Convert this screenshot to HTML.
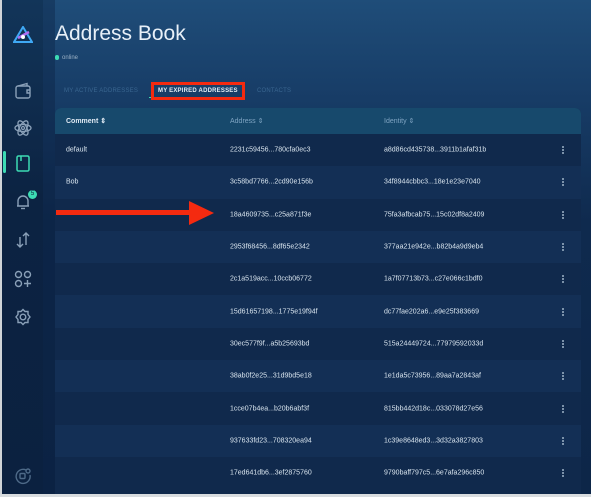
<!DOCTYPE html>
<html><head><meta charset="utf-8"><style>
*{margin:0;padding:0;box-sizing:border-box}
body{width:591px;height:497px;overflow:hidden;background:#fff;font-family:"Liberation Sans",sans-serif;position:relative}
#app{position:absolute;left:2px;top:0;width:589px;height:494px;background:linear-gradient(180deg,#1f4d79 0%,#173c66 20%,#0f2a4e 45%,#0d2648 100%);overflow:hidden}
#side{position:absolute;left:0;top:0;width:41px;height:494px;background:linear-gradient(180deg,#123559 0%,#0c2342 40%,#0b2140 100%)}
#side2{position:absolute;left:41px;top:0;width:12px;height:494px;background:rgba(10,30,60,0.35)}
.ic{position:absolute;left:12px;width:18px;height:18px}
h1{position:absolute;left:53px;top:22px;font-size:21px;font-weight:normal;color:#e8f0f8}
.onl{position:absolute;left:53px;top:55px;font-size:6px;color:#9ab0c4}
.onl i{display:inline-block;width:4px;height:5px;background:#3ddcb4;border-radius:2px;margin-right:3px;vertical-align:-1px}
.tab{position:absolute;top:88px;font-size:6px;color:#3a6690;letter-spacing:.2px}
#tbl{position:absolute;left:53px;top:108px;width:526px;height:390px;border-radius:6px 6px 0 0;overflow:hidden;background:#10294c}
.hd{height:26px;background:#17496c;position:relative;font-size:7px;color:#7fa4c2}
.row{height:32.3px;position:relative;font-size:7px;color:#d8e4ee}
.row:nth-child(even){background:#10294c}
.row:nth-child(odd){background:#132f55}
.c1{position:absolute;left:11px;top:50%;transform:translateY(-50%)}
.c2{position:absolute;left:175px;top:50%;transform:translateY(-50%)}
.c3{position:absolute;left:329px;top:50%;transform:translateY(-50%)}
.dots{position:absolute;left:507px;top:50%;transform:translateY(-50%);width:2px;height:9px;background:radial-gradient(circle,#9fb4c8 0.9px,transparent 1px) 0 0/2px 3px}
</style></head><body>
<div id="app">
<div id="side"></div><div id="side2"></div>
<svg style="position:absolute;left:11px;top:26px" width="20" height="18" viewBox="0 0 20 18"><polygon points="10,1 19,16 1,16" fill="none" stroke="#3fa9f5" stroke-width="2"/><path d="M5 12 L16 6" stroke="#b06cf0" stroke-width="2.5"/><circle cx="10" cy="11" r="2" fill="#fff"/></svg>
<svg class="ic" style="top:82px" viewBox="0 0 18 18" fill="none" stroke="#8aa0b8" stroke-width="1.4"><rect x="2" y="4" width="14" height="12" rx="2"/><path d="M4 4 L13 1.5 L13 4"/><path d="M16 8 h-3 v3 h3"/></svg>
<svg class="ic" style="top:119px" viewBox="0 0 18 18" fill="none" stroke="#8aa0b8" stroke-width="1.3"><ellipse cx="9" cy="9" rx="8" ry="3.5"/><ellipse cx="9" cy="9" rx="8" ry="3.5" transform="rotate(60 9 9)"/><ellipse cx="9" cy="9" rx="8" ry="3.5" transform="rotate(120 9 9)"/><circle cx="9" cy="9" r="1.5"/></svg>
<div style="position:absolute;left:1px;top:151px;width:3px;height:22px;background:#3ddcb4;border-radius:2px"></div>
<svg class="ic" style="top:154px" viewBox="0 0 18 18" fill="none" stroke="#3ddcb4" stroke-width="1.5"><rect x="3" y="2" width="12" height="15" rx="1.5"/><path d="M7 2 v5"/></svg>
<svg class="ic" style="top:193px" viewBox="0 0 18 18" fill="none" stroke="#8aa0b8" stroke-width="1.4"><path d="M4 13 V8 a5 5 0 0 1 10 0 V13 H3 H15"/><path d="M7 15.5 h4"/></svg>
<div style="position:absolute;left:26px;top:190px;width:9px;height:9px;border-radius:50%;background:#3ddcb4;color:#0b2240;font-size:6px;text-align:center;line-height:9px">5</div>
<svg class="ic" style="top:231px" viewBox="0 0 18 18" fill="none" stroke="#8aa0b8" stroke-width="1.4"><path d="M6 6 v10 M3 13 l3 3 l3-3"/><path d="M12 14 V2 M9 5 l3-3 l3 3"/></svg>
<svg class="ic" style="top:270px" viewBox="0 0 18 18" fill="none" stroke="#8aa0b8" stroke-width="1.4"><circle cx="4.5" cy="4.5" r="3"/><circle cx="13.5" cy="4.5" r="3"/><circle cx="4.5" cy="13.5" r="3"/><path d="M13.5 10 v7 M10 13.5 h7"/></svg>
<svg class="ic" style="top:308px" viewBox="0 0 18 18" fill="none" stroke="#8aa0b8" stroke-width="1.4"><path d="M9 1.5 l2 2 h3 v3 l2 2.5 l-2 2.5 v3 h-3 l-2 2 l-2-2 h-3 v-3 l-2-2.5 l2-2.5 v-3 h3z"/><circle cx="9" cy="9" r="2.8"/></svg>
<svg class="ic" style="top:467px" viewBox="0 0 18 18" fill="none" stroke="#4e6a88" stroke-width="1.4"><path d="M12 3 A7 7 0 1 0 16 8"/><rect x="6" y="6.5" width="5" height="5" rx="1"/><circle cx="14" cy="4" r="2"/></svg>
<h1>Address Book</h1>
<div class="onl"><i></i>online</div>
<div class="tab" style="left:62px">MY ACTIVE ADDRESSES</div>
<div class="tab" style="left:156px;color:#e6eef6;font-weight:bold">MY EXPIRED ADDRESSES</div>
<div style="position:absolute;left:147px;top:97px;width:95px;height:1px;background:#3ddcb4"></div>
<div class="tab" style="left:255px">CONTACTS</div>
<div id="tbl">
<div class="hd"><span class="c1" style="color:#e0eaf4;font-weight:bold">Comment ⇕</span><span class="c2">Address ⇕</span><span class="c3">Identity ⇕</span></div>
<div class="row"><span class="c1">default</span><span class="c2">2231c59456...780cfa0ec3</span><span class="c3">a8d86cd435738...3911b1afaf31b</span><i class="dots"></i></div>
<div class="row"><span class="c1">Bob</span><span class="c2">3c58bd7766...2cd90e156b</span><span class="c3">34f8944cbbc3...18e1e23e7040</span><i class="dots"></i></div>
<div class="row"><span class="c2">18a4609735...c25a871f3e</span><span class="c3">75fa3afbcab75...15c02df8a2409</span><i class="dots"></i></div>
<div class="row"><span class="c2">2953f68456...8df65e2342</span><span class="c3">377aa21e942e...b82b4a9d9eb4</span><i class="dots"></i></div>
<div class="row"><span class="c2">2c1a519acc...10ccb06772</span><span class="c3">1a7f07713b73...c27e066c1bdf0</span><i class="dots"></i></div>
<div class="row"><span class="c2">15d61657198...1775e19f94f</span><span class="c3">dc77fae202a6...e9e25f383669</span><i class="dots"></i></div>
<div class="row"><span class="c2">30ec577f9f...a5b25693bd</span><span class="c3">515a24449724...77979592033d</span><i class="dots"></i></div>
<div class="row"><span class="c2">38ab0f2e25...31d9bd5e18</span><span class="c3">1e1da5c73956...89aa7a2843af</span><i class="dots"></i></div>
<div class="row"><span class="c2">1cce07b4ea...b20b6abf3f</span><span class="c3">815bb442d18c...033078d27e56</span><i class="dots"></i></div>
<div class="row"><span class="c2">937633fd23...708320ea94</span><span class="c3">1c39e8648ed3...3d32a3827803</span><i class="dots"></i></div>
<div class="row"><span class="c2">17ed641db6...3ef2875760</span><span class="c3">9790baff797c5...6e7afa296c850</span><i class="dots"></i></div>
</div>
</div>
<div style="position:absolute;left:0;top:0;width:2px;height:497px;background:#d0d4d8"></div>
<div style="position:absolute;left:0;top:494px;width:591px;height:3px;background:#d8dcdf"></div>
<div style="position:absolute;left:151px;top:82px;width:94px;height:18px;border:3px solid #f42a10"></div>
<div style="position:absolute;left:56px;top:210px;width:135px;height:5px;background:#f42a10"></div>
<div style="position:absolute;left:189px;top:201px;width:0;height:0;border-top:12px solid transparent;border-bottom:12px solid transparent;border-left:25px solid #f42a10"></div>
</body></html>
